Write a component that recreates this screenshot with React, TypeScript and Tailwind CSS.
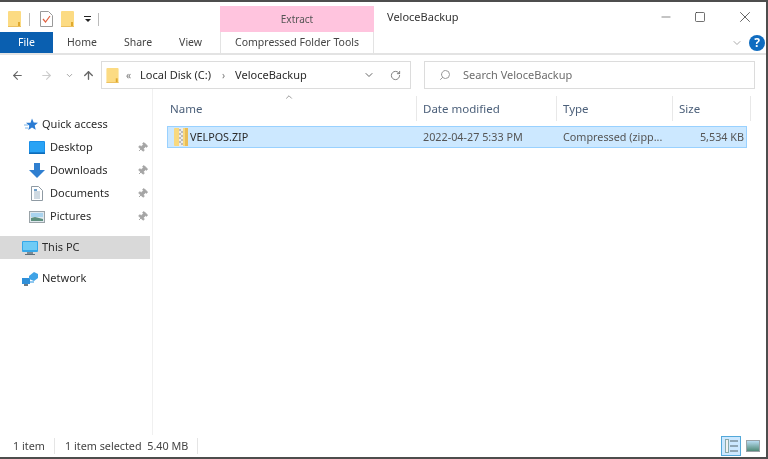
import { ArrowLeft, ArrowRight, ArrowUp, ChevronDown, ChevronUp, RotateCw, Search, X, Minus, Square, Pin } from "lucide-react";

function Folder({ className = "" }: { className?: string }) {
  return (
    <svg viewBox="0 0 13 16" className={className}>
      <rect width="13" height="16" rx="1" fill="#fcdb83" />
      <rect x="10" y="11" width="2" height="5" fill="#e0a92e" />
      <rect x="0" y="15" width="13" height="1" fill="#ecc05f" />
    </svg>
  );
}

function Checklist() {
  return (
    <svg viewBox="0 0 13 16" className="w-[13px] h-[16px]">
      <path d="M.5.5h8l4 4v11H.5z" fill="#fff" stroke="#9a9a9a" />
      <path d="M3 8l2.5 3L10 5" fill="none" stroke="#e0603f" strokeWidth="1.2" />
    </svg>
  );
}

function QuickStar() {
  return (
    <svg viewBox="0 0 14 14" className="w-[14px] h-[14px] mr-[4px]">
      <path d="M8 .5l1.7 4 4.3.3-3.3 2.8 1 4.2L8 9.6 4.3 12l1-4.2L2 4.8h4.5z" fill="#2b7cd3" />
      <path d="M0 7h4M1 10h3" stroke="#7db4e6" />
    </svg>
  );
}

function DesktopIcon() {
  return (
    <svg viewBox="0 0 16 13" className="w-[16px] h-[13px]">
      <rect width="16" height="13" rx="1" fill="#1a8fe8" />
      <rect x="1" y="1" width="14" height="10" fill="#29a3f5" />
      <rect x="0" y="11.5" width="16" height="1.5" fill="#0e6cb8" />
    </svg>
  );
}

function DownloadIcon() {
  return (
    <svg viewBox="0 0 16 15" className="w-[16px] h-[15px]">
      <path d="M5 0h6v7h5l-8 8-8-8h5z" fill="#2f7fd0" />
    </svg>
  );
}

function DocumentIcon() {
  return (
    <svg viewBox="0 0 12 15" className="w-[12px] h-[15px] ml-[2px] mr-[2px]">
      <path d="M.5.5h7l4 4v10H.5z" fill="#fff" stroke="#8f9aa3" />
      <path d="M3 6h6M3 8h6M3 10h6M3 12h6" stroke="#9fb4c4" />
      <rect x="3" y="3" width="3" height="2" fill="#6f9fc9" />
    </svg>
  );
}

function PictureIcon() {
  return (
    <svg viewBox="0 0 16 12" className="w-[16px] h-[12px]">
      <rect x=".5" y=".5" width="15" height="11" fill="#dfe8ee" stroke="#9aa3a8" />
      <rect x="2" y="2" width="12" height="4" fill="#a9d3ee" />
      <path d="M2 10V7l4-1 8 2v2z" fill="#5d8f7d" />
    </svg>
  );
}

function PcIcon() {
  return (
    <svg viewBox="0 0 16 14" className="w-[16px] h-[14px]">
      <rect width="16" height="11" rx="1" fill="#35a7e8" />
      <rect x="1" y="1" width="14" height="8" fill="#6fcbf5" />
      <rect x="5" y="11" width="6" height="2" fill="#7b8b96" />
      <rect x="3" y="13" width="10" height="1" fill="#5f6e78" />
    </svg>
  );
}

function NetworkIcon() {
  return (
    <svg viewBox="0 0 16 14" className="w-[16px] h-[14px]">
      <rect x="0" y="6" width="8" height="6" fill="#2f8fd8" />
      <rect x="2" y="12" width="4" height="2" fill="#6b7a85" />
      <path d="M7 4l5-4 4 2v4l-4 3-5-2z" fill="#3fa3e6" />
      <path d="M8 9h4v2H8z" fill="#8fc7ef" />
    </svg>
  );
}

function ZipIcon() {
  return (
    <svg viewBox="0 0 14 18" className="w-[14px] h-[18px]">
      <rect width="14" height="18" rx="1" fill="#f8d97f" />
      <rect x="11" y="0" width="3" height="18" fill="#e9bd57" />
      <rect x="5" y="0" width="4" height="18" fill="#ececec" />
      <path d="M5 2h2M7 4h2M5 6h2M7 8h2M5 10h2M7 12h2M5 14h2M7 16h2" stroke="#8a8a8a" />
    </svg>
  );
}

function NavItem({ icon, label }: { icon: React.ReactNode; label: string }) {
  return (
    <div className="h-[23px] flex items-center pl-[29px] pr-[2px]">
      <span className="w-[16px] flex justify-center items-center shrink-0">{icon}</span>
      <span className="ml-[5px] flex-1">{label}</span>
      <Pin className="w-[11px] h-[11px] text-[#a5a5a5] fill-[#a5a5a5] rotate-45 mr-[2px]" />
    </div>
  );
}

function HeaderCell({ label, width }: { label: string; width: string }) {
  return (
    <div className={`${width} h-[25px] flex items-center pl-[6px] border-r border-[#e8e8e8] text-[#4c607a]`}>
      {label}
    </div>
  );
}

export default function App() {
  return (
    <div
      className="w-[768px] h-[459px] bg-white flex flex-col overflow-hidden border-t-2 border-b-2 border-r-2 border-[#4d4d4d] text-[11px] text-[#2b2b2b] blur-[0.45px]"
      style={{ fontFamily: '"Noto Sans", "Open Sans", sans-serif' }}
    >
      {/* title bar */}
      <div className="h-[30px] flex shrink-0">
        <div className="flex items-center w-[220px] pl-[8px] pt-[4px]">
          <Folder className="w-[13px] h-[16px]" />
          <div className="w-px h-[13px] bg-[#bbb] ml-[8px] mr-[10px]" />
          <Checklist />
          <Folder className="w-[13px] h-[16px] ml-[8px]" />
          <div className="ml-[10px] flex flex-col items-center">
            <div className="w-[7px] h-px bg-[#222] mb-[2px]" />
            <div className="w-0 h-0 border-x-[3px] border-x-transparent border-t-[3px] border-t-[#222]" />
          </div>
          <div className="w-px h-[13px] bg-[#bbb] ml-[7px]" />
        </div>
        <div className="w-[154px] mt-[4px] bg-[#ffc4de] flex items-center justify-center text-[#555] text-[10px]">
          Extract
        </div>
        <div className="pl-[13px] flex-1 flex items-center text-[#333]">VeloceBackup</div>
        <div className="flex items-center text-[#333]">
          <Minus className="w-[14px] h-[14px]" strokeWidth={1} />
          <Square className="w-[12px] h-[12px] ml-[21px]" strokeWidth={1.4} />
          <X className="w-[18px] h-[18px] ml-[30px] mr-[12px]" strokeWidth={1} />
        </div>
      </div>

      {/* ribbon tabs */}
      <div className="h-[23px] flex shrink-0 items-stretch border-b-2 border-[#e3e3e3] text-[#444] text-[10.5px]">
        <div className="w-[53px] bg-[#0a5fb0] text-white flex items-center justify-center pt-[1px]">File</div>
        <div className="w-[167px] flex items-center pt-[1px]">
          <span className="ml-[14px]">Home</span>
          <span className="ml-[27px]">Share</span>
          <span className="ml-[27px]">View</span>
        </div>
        <div className="w-[154px] bg-white border-x border-[#e3e3e3] flex items-center justify-center pt-[1px]">
          Compressed Folder Tools
        </div>
        <div className="flex-1 flex items-center justify-end pr-[1px]">
          <ChevronDown className="w-[12px] h-[12px] text-[#aaa]" />
          <div className="w-[16px] h-[16px] ml-[6px] rounded-full bg-[#0f6cc0] text-white flex items-center justify-center font-bold text-[12px]">
            ?
          </div>
        </div>
      </div>

      {/* address bar */}
      <div className="h-[28px] mt-[6px] flex items-stretch shrink-0">
        <div className="w-[101px] flex items-center pl-[11px]">
          <ArrowLeft className="w-[13px] h-[13px] text-[#666]" />
          <ArrowRight className="w-[13px] h-[13px] ml-[16px] text-[#ccc]" />
          <ChevronDown className="w-[9px] h-[9px] ml-[12px] text-[#888]" />
          <ArrowUp className="w-[13px] h-[13px] ml-[8px] text-[#666]" strokeWidth={2.5} />
        </div>
        <div className="w-[310px] border border-[#dcdcdc] flex items-center pl-[4px]">
          <Folder className="w-[13px] h-[15px]" />
          <span className="ml-[7px] text-[#777] text-[10px]">«</span>
          <span className="ml-[9px] w-[72px] whitespace-nowrap">Local Disk (C:)</span>
          <span className="ml-[10px] w-[4px] text-[#777] text-[10px]">›</span>
          <span className="ml-[9px] w-[70px] whitespace-nowrap">VeloceBackup</span>
          <ChevronDown className="w-[12px] h-[12px] ml-[58px] text-[#666]" />
          <RotateCw className="w-[11px] h-[11px] ml-[15px] text-[#777]" />
        </div>
        <div className="w-[331px] ml-[13px] border border-[#dcdcdc] flex items-center pl-[14px] text-[#6d6d6d]">
          <Search className="w-[12px] h-[12px] -scale-x-100 text-[#999]" />
          <span className="ml-[12px]">Search VeloceBackup</span>
        </div>
      </div>

      {/* main */}
      <div className="flex-1 flex min-h-0">
        <div className="w-[153px] shrink-0 border-r border-[#f0f0f0] pt-[24px]">
          <div className="h-[23px] flex items-center pl-[24px]">
            <QuickStar />
            Quick access
          </div>
          <NavItem icon={<DesktopIcon />} label="Desktop" />
          <NavItem icon={<DownloadIcon />} label="Downloads" />
          <NavItem icon={<DocumentIcon />} label="Documents" />
          <NavItem icon={<PictureIcon />} label="Pictures" />
          <div className="w-[150px] h-[23px] mt-[8px] bg-[#d9d9d9] flex items-center pl-[22px]">
            <PcIcon />
            <span className="ml-[4px]">This PC</span>
          </div>
          <div className="h-[23px] mt-[8px] flex items-center pl-[22px]">
            <NetworkIcon />
            <span className="ml-[4px]">Network</span>
          </div>
        </div>

        <div className="flex-1 flex flex-col min-w-0 pt-[7px]">
          <div className="relative flex pl-[11px] text-[11.5px]">
            <ChevronUp className="absolute left-[131px] -top-[4px] w-[10px] h-[10px] text-[#888]" />
            <HeaderCell label="Name" width="w-[253px]" />
            <HeaderCell label="Date modified" width="w-[140px]" />
            <HeaderCell label="Type" width="w-[116px]" />
            <HeaderCell label="Size" width="w-[78px]" />
          </div>
          <div className="ml-[14px] mt-[5px] w-[580px] h-[22px] bg-[#cce8ff] border border-[#99d1ff] flex items-center text-[10.8px]">
            <div className="w-[249px] flex items-center pl-[6px]">
              <ZipIcon />
              <span className="ml-[2px]">VELPOS.ZIP</span>
            </div>
            <div className="w-[140px] pl-[6px] text-[#555]">2022-04-27 5:33 PM</div>
            <div className="w-[116px] pl-[6px] text-[#555]">Compressed (zipp...</div>
            <div className="w-[71px] text-right text-[#555]">5,534 KB</div>
          </div>
        </div>
      </div>

      {/* status bar */}
      <div className="h-[22px] flex items-center shrink-0 pl-[13px] text-[#444] text-[10.8px]">
        <span className="w-[42px] border-r border-[#e5e5e5]">1 item</span>
        <span className="pl-[10px] w-[143px] border-r border-[#e5e5e5] whitespace-nowrap">1 item selected&nbsp;&nbsp;5.40 MB</span>
        <div className="flex-1" />
        <div className="w-[20px] h-[20px] bg-[#cce8ff] border border-[#52a8d9] flex items-center justify-center gap-[1px]">
          <div className="w-[4px] h-[14px] bg-[#f2f2f2] border border-[#8aa]" />
          <div className="flex flex-col gap-[3px]">
            <div className="w-[8px] h-[2px] bg-[#8fa6b5]" />
            <div className="w-[8px] h-[2px] bg-[#8fa6b5]" />
            <div className="w-[8px] h-[2px] bg-[#8fa6b5]" />
          </div>
        </div>
        <div className="w-[14px] h-[12px] ml-[5px] mr-[6px] border border-[#9aa3a8] bg-gradient-to-b from-[#b8dcf2] to-[#4f8a78]" />
      </div>
    </div>
  );
}
